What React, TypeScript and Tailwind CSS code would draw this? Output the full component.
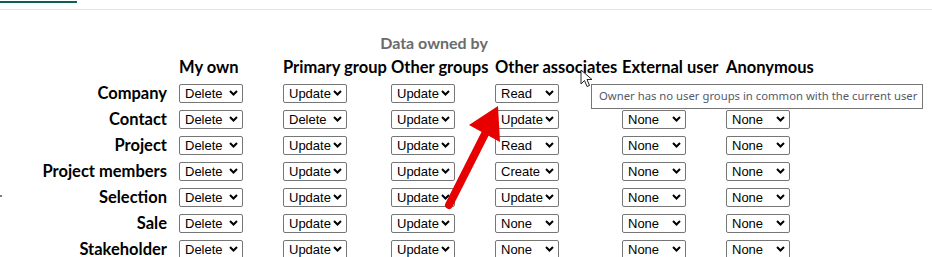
import { Fragment } from 'react';

const columns = [
  'My own',
  'Primary group',
  'Other groups',
  'Other associates',
  'External user',
  'Anonymous',
];

// empty string = cell hidden behind the tooltip
const rows: { name: string; values: string[] }[] = [
  { name: 'Company', values: ['Delete', 'Update', 'Update', 'Read', '', ''] },
  { name: 'Contact', values: ['Delete', 'Delete', 'Update', 'Update', 'None', 'None'] },
  { name: 'Project', values: ['Delete', 'Update', 'Update', 'Read', 'None', 'None'] },
  { name: 'Project members', values: ['Delete', 'Update', 'Update', 'Create', 'None', 'None'] },
  { name: 'Selection', values: ['Delete', 'Update', 'Update', 'Update', 'None', 'None'] },
  { name: 'Sale', values: ['Delete', 'Update', 'Update', 'None', 'None', 'None'] },
  { name: 'Stakeholder', values: ['Delete', 'Update', 'Update', 'None', 'None', 'None'] },
];

const Chevron = () => (
  <svg width="9" height="6" viewBox="0 0 9 6" className="shrink-0">
    <path d="M1 1 L4.5 4.5 L8 1" fill="none" stroke="#000" strokeWidth="2" />
  </svg>
);

const RightSelect: React.FC<{ value: string }> = ({ value }) => (
  <div
    role="combobox"
    className="w-[64px] h-[19px] flex items-center justify-between border border-[#767676] rounded-[2px] bg-white pl-[5px] pr-[4px] text-[13px] leading-none text-black font-['Liberation_Sans',Arial,sans-serif]"
  >
    <span>{value}</span>
    <Chevron />
  </div>
);

export default function App() {
  return (
    <div className="relative w-[932px] h-[257px] overflow-hidden bg-white font-['Lato',sans-serif]">
      <div className="h-[9px] border-b border-[#e3e3e3]">
        <div className="mt-[1px] w-[77px] h-[2px] bg-[#0e5f58]" />
      </div>

      <div className="w-[868px] pt-[21px]">
        <div className="h-[23px] flex items-center justify-center text-[16px] font-bold text-[#6b6b6b]">
          Data owned by
        </div>
        <div className="grid grid-cols-[179px_104px_108px_104px_127px_104px_1fr]">
          <div className="h-[26px]" />
          {columns.map((c) => (
            <div
              key={c}
              className="h-[26px] flex items-center text-[16.5px] font-bold text-black whitespace-nowrap"
            >
              {c}
            </div>
          ))}
          {rows.map((r) => (
            <Fragment key={r.name}>
              <div className="h-[26px] flex items-center justify-end pr-[12px] text-[16.5px] font-bold text-black whitespace-nowrap">
                {r.name}
              </div>
              {r.values.map((v, i) => (
                <div key={i} className="h-[26px] flex items-center">
                  {v && <RightSelect value={v} />}
                </div>
              ))}
            </Fragment>
          ))}
        </div>
      </div>

      <div className="absolute left-0 top-[195px] w-[2px] h-[2px] bg-[#6b7c9a]" />

      {/* tooltip */}
      <div className="absolute left-[591px] top-[84px] w-[332px] h-[25px] border border-[#767676] bg-white flex items-center pl-[7px] text-[11.3px] text-[#535b6b] font-['Noto_Sans',sans-serif] whitespace-nowrap">
        Owner has no user groups in common with the current user
      </div>

      {/* mouse cursor */}
      <svg
        className="absolute left-[580px] top-[69px]"
        width="14"
        height="20"
        viewBox="0 0 14 20"
      >
        <path
          d="M1 1 L1 15 L4.5 11.5 L7 17.5 L9.5 16.5 L7 10.5 L12 10.5 Z"
          fill="white"
          stroke="#222"
          strokeWidth="1"
          strokeLinejoin="round"
        />
      </svg>

      {/* red annotation arrow */}
      <svg className="absolute left-0 top-0 pointer-events-none" width="932" height="257">
        <line
          x1="449"
          y1="205"
          x2="488"
          y2="128"
          stroke="#e60000"
          strokeWidth="8"
          strokeLinecap="round"
        />
        <polygon points="498,106 469,125 500,142" fill="#e60000" />
      </svg>
    </div>
  );
}
